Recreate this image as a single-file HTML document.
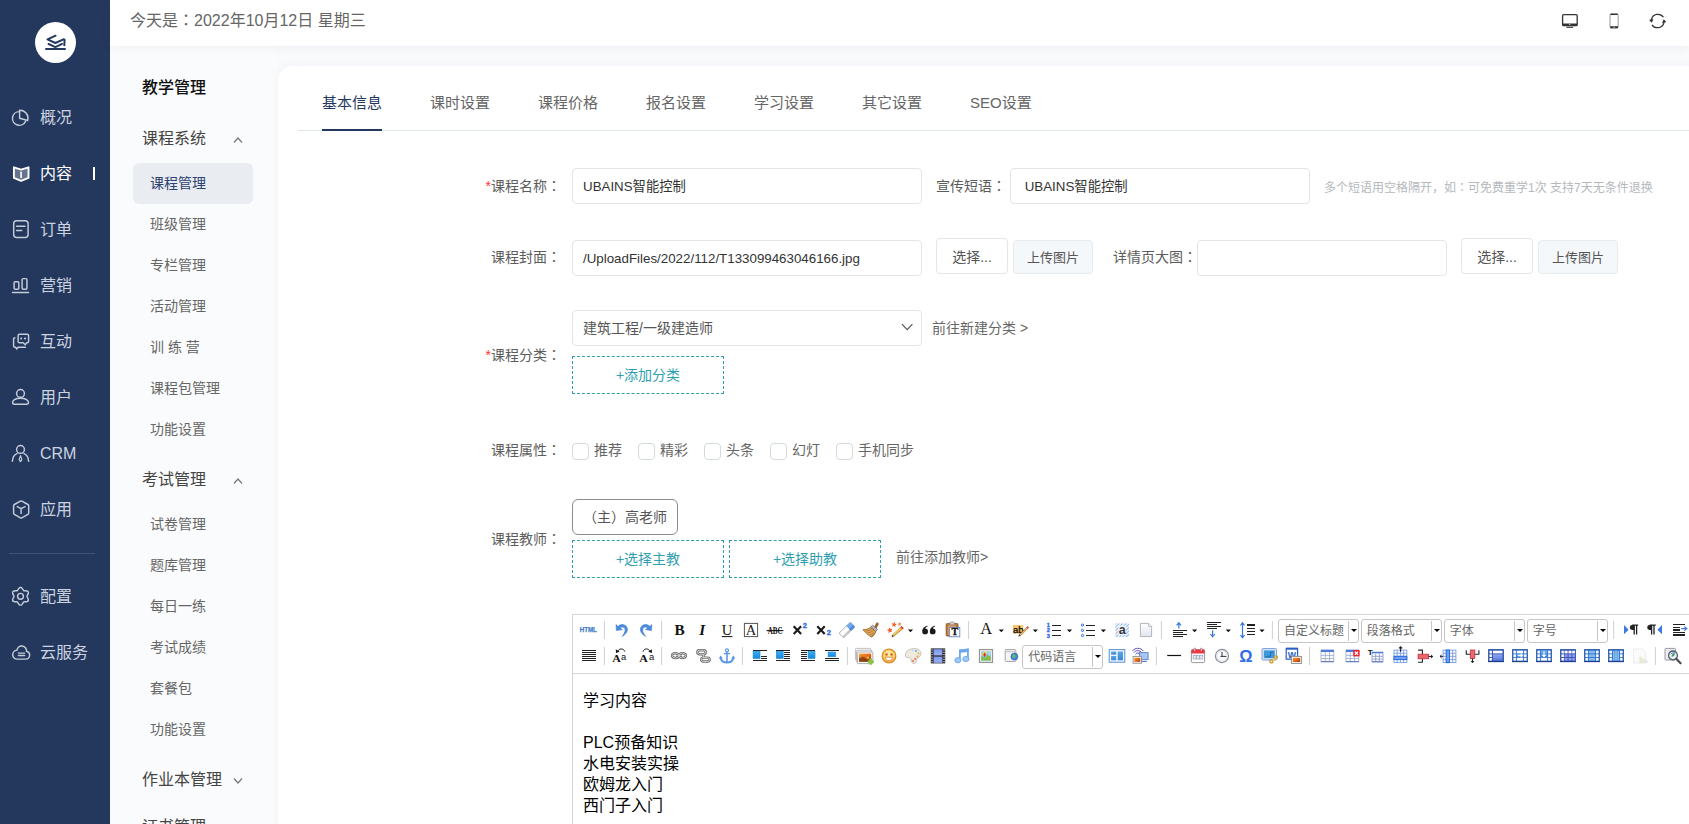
<!DOCTYPE html>
<html lang="zh-CN">
<head>
<meta charset="utf-8">
<title>课程管理</title>
<style>
*{box-sizing:border-box;margin:0;padding:0}
html,body{width:1689px;height:824px;overflow:hidden;background:#f9fafc;font-family:"Liberation Sans","Noto Sans CJK SC",sans-serif;font-size:14px;color:#555}
.abs{position:absolute}
.c{font-family:"Noto Sans CJK TC","Noto Sans CJK SC",sans-serif;line-height:0}
#side{position:absolute;left:0;top:0;width:110px;height:824px;background:#24385d}
#logo{position:absolute;left:35px;top:22px;width:41px;height:41px;border-radius:50%;background:#fff}
#logo svg{position:absolute;left:0;top:0;width:41px;height:41px;fill:none;stroke:#24385d;stroke-width:2;stroke-linecap:round;stroke-linejoin:round}
.nav{position:absolute;left:0;width:110px;height:24px;color:#ccd3e0;font-size:16px;line-height:24px}
.nav span{position:absolute;left:40px;top:1px;white-space:nowrap}
.nav.on{color:#fff}
#navico{position:absolute;left:0;top:0;width:110px;height:824px;fill:none;stroke:#c5ccd9;stroke-width:1.45;stroke-linecap:round;stroke-linejoin:round}
#top{position:absolute;left:110px;top:0;width:1579px;height:46px;background:#fff;box-shadow:0 2px 10px rgba(40,60,100,.06)}
#top .date{position:absolute;left:20px;top:0;line-height:41px;font-size:16px;color:#666;white-space:nowrap}
#top svg{position:absolute;left:0;top:0;width:1579px;height:46px}
#sub{position:absolute;left:110px;top:46px;width:168px;height:778px;background:#fafbfc}
#sub .h1{position:absolute;left:32px;top:30px;font-size:16px;font-weight:500;color:#111;line-height:24px}
#sub .grp{position:absolute;left:32px;font-size:16px;color:#444;line-height:24px;white-space:nowrap}
#sub .it{position:absolute;left:23px;width:120px;height:41px;line-height:41px;padding-left:17px;font-size:14px;color:#666;border-radius:6px;white-space:nowrap}
#sub .it.on{background:#e9ecf1;color:#2c4270}
#sub svg.ar{position:absolute;left:123px;width:10px;height:6px;fill:none;stroke:#777;stroke-width:1.2}
#main{position:absolute;left:278px;top:66px;width:1420px;height:800px;background:#fff;border-radius:14px 0 0 0;box-shadow:0 0 12px rgba(40,60,100,.04)}
#tabs{position:absolute;left:20px;top:0;right:0;height:65px;border-bottom:1px solid #dfe6ea}
.tab{position:absolute;top:25px;font-size:15px;line-height:24px;color:#666;white-space:nowrap}
.tab.on{color:#24385d}
.tab.on:after{content:"";position:absolute;left:0;right:0;top:38px;height:2px;background:#24385d}
#form{position:absolute;left:0;top:0;width:1689px;height:824px}
.lbl{position:absolute;font-size:14px;color:#5c5c5c;line-height:20px;white-space:nowrap;text-align:right;width:100px}
.lbl i{color:#f33;font-style:normal}
.inp{position:absolute;height:36px;border:1px solid #e2e6e6;border-radius:4px;background:#fff;font-size:13.3333px;color:#333;line-height:36px;padding-left:10px;white-space:pre;overflow:hidden}
.btn{position:absolute;height:36px;border:1px solid #e2e6e6;border-radius:4px;background:#fff;font-size:14px;color:#555;line-height:36px;text-align:center;white-space:nowrap}
.btn.g{height:34px;line-height:33px;font-size:13px;background:#f5f8fa;border-color:#e6ebee;color:#555}
.dash{position:absolute;width:152px;height:38px;border:1px dashed #2f9fb0;color:#2f9fb0;font-size:14px;line-height:36px;text-align:center;white-space:nowrap}
.txt{position:absolute;font-size:14px;color:#666;line-height:20px;white-space:nowrap}
.cb{position:absolute;top:443px;width:17px;height:17px;border:1px solid #d3dada;border-radius:4px;background:#fff}
#ed{position:absolute;left:572px;top:614px;width:1200px;height:300px;border:1px solid #d4d4d4;background:#fff}
#edbar{position:absolute;left:0;top:0;width:1200px;height:59px;border-bottom:1px solid #d4d4d4;background:#fff}
#edtxt{position:absolute;left:10px;top:75px;font-size:16px;line-height:21px;color:#000;white-space:nowrap}
#tb{position:absolute;left:572px;top:614px;width:1117px;height:60px}
.cmb{position:absolute;height:24px;border:1px solid #c6c6c6;border-radius:3px;background:#fff;font-size:12px;line-height:22px;color:#666;padding-left:5px;white-space:nowrap}
.cmb:before{content:"";position:absolute;right:9px;top:1px;bottom:1px;width:1px;background:#c6c6c6}
.cmb:after{content:"";position:absolute;right:1px;top:9px;border:3px solid transparent;border-top:3px solid #000;border-bottom:0}
</style>
</head>
<body>
<div id="side">
  <div id="logo"><svg viewBox="0 0 41 41"><path d="M20.6 13.7 12.5 17.4 20.4 21 28.5 17.3 29.6 17.7 29.3 23.3"/><path d="M13.6 22 20.4 25.1 27 21.9"/><path d="M11 27H30"/></svg></div>
  <div class="nav" style="top:105px"><span>概况</span></div>
  <div class="nav on" style="top:161px"><span>内容</span></div>
  <div class="nav" style="top:217px"><span>订单</span></div>
  <div class="nav" style="top:273px"><span>营销</span></div>
  <div class="nav" style="top:329px"><span>互动</span></div>
  <div class="nav" style="top:385px"><span>用户</span></div>
  <div class="nav" style="top:441px"><span>CRM</span></div>
  <div class="nav" style="top:497px"><span>应用</span></div>
  <div class="abs" style="left:9px;top:553px;width:86px;height:1px;background:#3f5278"></div>
  <div class="nav" style="top:584px"><span>配置</span></div>
  <div class="nav" style="top:640px"><span>云服务</span></div>
  <div class="abs" style="left:93px;top:167px;width:2px;height:13px;background:#fff"></div>
  <svg id="navico" viewBox="0 0 110 824">
    <!-- overview pie -->
    <path d="M19.35 111.6A6.85 6.85 0 1 0 25.56 121.34"/><path d="M19.6 110.2A8.1 8.1 0 0 1 27.7 120.5L19.6 118.2Z"/>
    <!-- content book (active) -->
    <path d="M13.9 167.3 21.1 169.6 28.5 167.3V177.9L21.1 180.9 13.9 177.9Z" stroke="#fff" stroke-width="1.9" fill="rgba(255,255,255,.3)"/><path d="M21.1 172.2V177.4" stroke="#fff" stroke-width="1.6"/>
    <!-- order -->
    <rect x="13.7" y="220.8" width="14.4" height="16.6" rx="3"/><path d="M16.6 226.2H25M16.6 230.4H21.8"/>
    <!-- marketing -->
    <rect x="14.1" y="281.8" width="4.7" height="7.4" rx="1"/><rect x="22.1" y="278.6" width="4.8" height="10.6" rx="1"/><path d="M12.5 292.5H28.6"/>
    <!-- interact -->
    <path d="M19.5 334.2H27.2A1.4 1.4 0 0 1 28.6 335.6V341.4A1.4 1.4 0 0 1 27.2 342.8H26.6L25.2 344.8 23.2 342.8H19.5A1.4 1.4 0 0 1 18.1 341.4V335.6A1.4 1.4 0 0 1 19.5 334.2Z"/><path d="M14.8 337.8A1 1 0 0 0 13.6 338.8V346A1.2 1.2 0 0 0 14.8 347.2H15.6L16.7 349 18.2 347.2H25.4"/><path d="M21.1 338.4H21.2M25 338.4H25.1" stroke-width="2"/>
    <!-- user -->
    <circle cx="20.5" cy="393.4" r="3.9"/><path d="M14.2 404.3H26.8A2 2 0 0 0 28.6 402.4C28 399.8 24.6 398.2 20.5 398.2S13 399.8 12.5 402.4A2 2 0 0 0 14.2 404.3Z"/>
    <!-- crm -->
    <circle cx="20.5" cy="449.4" r="3.9"/><path d="M12.4 461.2C12.6 457.6 14.4 454.7 17 453.6M24 453.6C26.6 454.7 28.4 457.6 28.6 461.2"/><path d="M20.5 455.6 21.9 459.6 20.5 461.6 19.1 459.6Z" stroke-width="1.2"/>
    <!-- app -->
    <path d="M20.4 501.1A1.6 1.6 0 0 1 21.9 501.1L27.9 504.5A1.6 1.6 0 0 1 28.7 505.9V512.9A1.6 1.6 0 0 1 27.9 514.3L21.9 517.8A1.6 1.6 0 0 1 20.4 517.8L14.4 514.3A1.6 1.6 0 0 1 13.6 512.9V505.9A1.6 1.6 0 0 1 14.4 504.5Z"/><path d="M17.3 506.6 21.1 508.6 25 506.6M21.1 508.6V513.4"/>
    <!-- settings -->
    <path d="M27.1 596.3 27.1 596.6 27.2 597.0 27.4 597.4 27.7 597.8 27.9 598.3 28.2 598.8 28.3 599.3 28.4 599.8 28.3 600.3 28.2 600.7 27.9 601.1 27.5 601.4 27.0 601.6 26.5 601.7 25.9 601.7 25.4 601.8 24.9 601.8 24.5 601.8 24.1 601.8 23.8 602.0 23.5 602.2 23.3 602.5 23.0 602.9 22.8 603.3 22.5 603.7 22.2 604.2 21.8 604.6 21.4 604.9 21.0 605.1 20.5 605.1 20.0 605.1 19.6 604.9 19.2 604.6 18.8 604.2 18.5 603.7 18.2 603.3 18.0 602.9 17.7 602.5 17.5 602.2 17.2 602.0 16.9 601.8 16.5 601.8 16.1 601.8 15.6 601.8 15.1 601.7 14.5 601.7 14.0 601.6 13.5 601.4 13.1 601.1 12.8 600.7 12.7 600.3 12.6 599.8 12.7 599.3 12.8 598.8 13.1 598.3 13.3 597.8 13.6 597.4 13.8 597.0 13.9 596.6 13.9 596.3 13.9 596.0 13.8 595.6 13.6 595.2 13.3 594.8 13.1 594.3 12.8 593.8 12.7 593.3 12.6 592.8 12.7 592.3 12.8 591.9 13.1 591.5 13.5 591.2 14.0 591.0 14.5 590.9 15.1 590.9 15.6 590.8 16.1 590.8 16.5 590.8 16.9 590.8 17.2 590.6 17.5 590.4 17.7 590.1 18.0 589.7 18.2 589.3 18.5 588.9 18.8 588.4 19.2 588.0 19.6 587.7 20.0 587.5 20.5 587.4 21.0 587.5 21.4 587.7 21.8 588.0 22.2 588.4 22.5 588.9 22.8 589.3 23.0 589.7 23.3 590.1 23.5 590.4 23.8 590.6 24.1 590.8 24.5 590.8 24.9 590.8 25.4 590.8 25.9 590.9 26.5 590.9 27.0 591.0 27.5 591.2 27.9 591.5 28.2 591.9 28.3 592.3 28.4 592.8 28.3 593.3 28.2 593.8 27.9 594.3 27.7 594.8 27.4 595.2 27.2 595.6 27.1 596.0Z"/><circle cx="20.5" cy="596.3" r="2.9"/>
    <!-- cloud -->
    <path transform="translate(21.2 652.5) scale(.92) translate(-20.83 -652.2)" stroke-width="1.57" d="M16.6 659.4H25.8A4.3 4.3 0 0 0 26.6 650.9 5 5 0 0 0 16.2 649.8 4.6 4.6 0 0 0 16.6 659.4Z"/><path d="M18.4 653.1H24.6M18.4 655.4H24.6"/>
  </svg>
</div>
<div id="sub">
  <div class="h1">教学管理</div>
  <div class="grp" style="top:81px">课程系统</div>
  <svg class="ar" style="top:91px" viewBox="0 0 10 6"><path d="M1 5.5 5 1 9 5.5"/></svg>
  <div class="it on" style="top:117px">课程管理</div>
  <div class="it" style="top:158px">班级管理</div>
  <div class="it" style="top:199px">专栏管理</div>
  <div class="it" style="top:240px">活动管理</div>
  <div class="it" style="top:281px">训 练 营</div>
  <div class="it" style="top:322px">课程包管理</div>
  <div class="it" style="top:363px">功能设置</div>
  <div class="grp" style="top:422px">考试管理</div>
  <svg class="ar" style="top:432px" viewBox="0 0 10 6"><path d="M1 5.5 5 1 9 5.5"/></svg>
  <div class="it" style="top:458px">试卷管理</div>
  <div class="it" style="top:499px">题库管理</div>
  <div class="it" style="top:540px">每日一练</div>
  <div class="it" style="top:581px">考试成绩</div>
  <div class="it" style="top:622px">套餐包</div>
  <div class="it" style="top:663px">功能设置</div>
  <div class="grp" style="top:722px">作业本管理</div>
  <svg class="ar" style="top:732px" viewBox="0 0 10 6"><path d="M1 .5 5 5 9 .5"/></svg>
  <div class="grp" style="top:769px">证书管理</div>
</div>
<div id="main">
  <div id="tabs">
    <div class="tab on" style="left:24px">基本信息</div>
    <div class="tab" style="left:132px">课时设置</div>
    <div class="tab" style="left:240px">课程价格</div>
    <div class="tab" style="left:348px">报名设置</div>
    <div class="tab" style="left:456px">学习设置</div>
    <div class="tab" style="left:564px">其它设置</div>
    <div class="tab" style="left:672px">SEO设置</div>
  </div>
</div>
<div id="form">
  <div class="lbl" style="left:461px;top:176px"><i>*</i>课程名称<span class="c" lang="zh-TW">：</span></div>
  <div class="inp" style="left:572px;top:168px;width:350px">UBAINS智能控制</div>
  <div class="lbl" style="left:906px;top:176px">宣传短语<span class="c" lang="zh-TW">：</span></div>
  <div class="inp" style="left:1010px;top:168px;width:300px"> UBAINS智能控制</div>
  <div class="txt" style="left:1324px;top:178px;font-size:12px;color:#b4b8bc">多个短语用空格隔开，如<span class="c" lang="zh-TW">：</span>可免费重学1次 支持7天无条件退换</div>

  <div class="lbl" style="left:461px;top:247px">课程封面<span class="c" lang="zh-TW">：</span></div>
  <div class="inp" style="left:572px;top:240px;width:350px">/UploadFiles/2022/112/T133099463046166.jpg</div>
  <div class="btn" style="left:936px;top:238px;width:72px">选择...</div>
  <div class="btn g" style="left:1013px;top:240px;width:80px">上传图片</div>
  <div class="lbl" style="left:1097px;top:247px">详情页大图<span class="c" lang="zh-TW">：</span></div>
  <div class="inp" style="left:1197px;top:240px;width:250px"></div>
  <div class="btn" style="left:1461px;top:238px;width:72px">选择...</div>
  <div class="btn g" style="left:1538px;top:240px;width:80px">上传图片</div>

  <div class="lbl" style="left:461px;top:345px"><i>*</i>课程分类<span class="c" lang="zh-TW">：</span></div>
  <div class="inp" style="left:572px;top:310px;width:350px;font-size:14px;line-height:34px;color:#555">建筑工程/一级建造师</div>
  <svg class="abs" style="left:900px;top:322px;width:14px;height:10px" viewBox="0 0 14 10"><path d="M2 2.2 7.2 7.6 12.4 2.2" fill="none" stroke="#555" stroke-width="1.2"/></svg>
  <div class="txt" style="left:932px;top:318px">前往新建分类 &gt;</div>
  <div class="dash" style="left:572px;top:356px">+添加分类</div>

  <div class="lbl" style="left:461px;top:440px">课程属性<span class="c" lang="zh-TW">：</span></div>
  <div class="cb" style="left:572px"></div><div class="txt" style="left:594px;top:440px">推荐</div>
  <div class="cb" style="left:638px"></div><div class="txt" style="left:660px;top:440px">精彩</div>
  <div class="cb" style="left:704px"></div><div class="txt" style="left:726px;top:440px">头条</div>
  <div class="cb" style="left:770px"></div><div class="txt" style="left:792px;top:440px">幻灯</div>
  <div class="cb" style="left:836px"></div><div class="txt" style="left:858px;top:440px">手机同步</div>

  <div class="lbl" style="left:461px;top:529px">课程教师<span class="c" lang="zh-TW">：</span></div>
  <div class="btn" style="left:572px;top:499px;width:106px;border-color:#8c8c8c;border-radius:6px;line-height:34px">（主）高老师</div>
  <div class="dash" style="left:572px;top:540px">+选择主教</div>
  <div class="dash" style="left:729px;top:540px">+选择助教</div>
  <div class="txt" style="left:896px;top:547px">前往添加教师&gt;</div>

  <div id="ed">
    <div id="edbar"></div>
    <div id="edtxt">学习内容<br><br>PLC预备知识<br>水电安装实操<br>欧姆龙入门<br>西门子入门</div>
  </div>
</div>
<div id="top">
  <div class="date">今天是<span class="c" lang="zh-TW">：</span>2022年10月12日 星期三</div>
  <svg viewBox="110 0 1579 46">
    <g fill="none" stroke="#333" stroke-width="1.3">
      <rect x="1562.6" y="14.6" width="14.6" height="11" rx="1.2"/>
      <path d="M1562.6 24.6H1577.2" stroke-width="2.2"/><path d="M1566.4 27.3H1573.2" stroke-width="1.1"/>
      <circle cx="1569.8" cy="24.5" r=".6" fill="#fff" stroke="none"/>
    </g>
    <g fill="none" stroke="#333">
      <rect x="1610" y="14" width="8.2" height="14" rx="1.3" stroke="#999" stroke-width="1"/>
      <path d="M1610.4 14.3H1617.8" stroke-width="1.4"/><path d="M1610.2 27.2H1618" stroke-width="2"/>
      <circle cx="1614.1" cy="27.2" r=".6" fill="#fff" stroke="none"/>
    </g>
    <g fill="none" stroke="#333" stroke-width="1.3">
      <path d="M1651.4 19.4A6.7 6.7 0 0 1 1663.4 17.2"/><path d="M1664 22.6A6.7 6.7 0 0 1 1652 24.8"/>
      <path d="M1649.6 20.2 1652.8 19.2 1651.8 22.2Z" fill="#333" stroke-width=".8"/><path d="M1665.8 21.8 1662.6 22.8 1663.8 19.8Z" fill="#333" stroke-width=".8"/>
    </g>
  </svg>
</div>
<svg id="tb" viewBox="572 614 1117 60"><defs>
<linearGradient id="gt" x1="0" y1="0" x2="0" y2="1"><stop offset="0" stop-color="#58a8e8"/><stop offset="1" stop-color="#3a88d4"/></linearGradient>
<pattern id="hatch" width="2.4" height="2.4" patternUnits="userSpaceOnUse" patternTransform="rotate(-45)"><rect width="2.4" height="2.4" fill="#fff"/><rect width="2.4" height="1.1" fill="#8ab4f4"/></pattern>
<linearGradient id="gd" x1="0" y1="0" x2="0" y2="1"><stop offset="0" stop-color="#fff"/><stop offset="1" stop-color="#dfe5f0"/></linearGradient>
<linearGradient id="gb" x1="0" y1="0" x2="0" y2="1"><stop offset="0" stop-color="#39adf4"/><stop offset="1" stop-color="#138ae0"/></linearGradient>
<linearGradient id="gi" x1="0" y1="0" x2="1" y2="1"><stop offset="0" stop-color="#f0a030"/><stop offset=".5" stop-color="#e86818"/><stop offset="1" stop-color="#8a3a10"/></linearGradient>
<radialGradient id="ge" cx=".5" cy=".4" r=".62"><stop offset="0" stop-color="#fff2b8"/><stop offset=".6" stop-color="#fbd878"/><stop offset="1" stop-color="#f0a83c"/></radialGradient>
<linearGradient id="gv" x1="0" y1="0" x2="0" y2="1"><stop offset="0" stop-color="#7a98ec"/><stop offset="1" stop-color="#9ab0f4"/></linearGradient>
<linearGradient id="gm" x1="0" y1="0" x2="0" y2="1"><stop offset="0" stop-color="#90a8f0"/><stop offset="1" stop-color="#5a78dc"/></linearGradient>
<linearGradient id="gm2" x1="0" y1="0" x2="0" y2="1"><stop offset="0" stop-color="#7ab4f0"/><stop offset="1" stop-color="#3c80dc"/></linearGradient>
</defs><g transform="translate(588.3 630)"><text x="-8.6" y="2.4" font-family="Liberation Sans,sans-serif" font-weight="bold" font-size="7.8" fill="#3d7cc4" stroke="#3d7cc4" stroke-width=".25" textLength="17.2" lengthAdjust="spacingAndGlyphs">HTML</text></g><path d="M604.4 621V639" stroke="#cfcfcf" stroke-width="1"/><g transform="translate(621.8 630)"><path d="M-5.8-5.4-5.4.6.6-.4-1.6-2C.4-3.8 3.2-2.8 3.3-.2 3.4 2 2 4.2.4 6.4 4 4.4 6 1.6 5.6-1.2 5-5.2-.4-7.2-3.8-3.6Z" fill="#4a8de0" stroke="#2f6fc4" stroke-width=".5"/></g><g transform="translate(646 630)"><path d="M5.8-5.4 5.4.6-.6-.4 1.6-2C-.4-3.8-3.2-2.8-3.3-.2-3.4 2-2 4.2-.4 6.4-4 4.4-6 1.6-5.6-1.2-5-5.2.4-7.2 3.800-3.600Z" fill="#4a8de0" stroke="#2f6fc4" stroke-width=".5"/></g><path d="M661.6 621V639" stroke="#cfcfcf" stroke-width="1"/><g transform="translate(679.6 630)"><text x="0" y="5" text-anchor="middle" font-family="Liberation Serif,serif" font-weight="bold" font-size="15.2" fill="#111">B</text></g><g transform="translate(702.6 630)"><text x="-.4" y="5" text-anchor="middle" font-family="Liberation Serif,serif" font-weight="bold" font-style="italic" font-size="15.2" fill="#111">I</text></g><g transform="translate(727 630)"><text x="0" y="4.6" text-anchor="middle" font-family="Liberation Serif,serif" font-size="14.6" fill="#111">U</text><path d="M-5.2 6.6H5.4" stroke="#111" stroke-width="1"/></g><g transform="translate(751 630)"><rect x="-6.6" y="-6.6" width="13.2" height="13.2" fill="#fff" stroke="#555" stroke-width="1"/><text x="0" y="5" text-anchor="middle" font-family="Liberation Serif,serif" font-size="14.5" fill="#222">A</text></g><g transform="translate(775 630)"><text x="-7.2" y="4.1" font-family="Liberation Serif,serif" font-weight="bold" font-size="11" fill="#111" textLength="14.8" lengthAdjust="spacingAndGlyphs">ABC</text><path d="M-8.4.6H8.4" stroke="#111" stroke-width="1.1"/></g><g transform="translate(799.5 630)"><path d="M-5.8-3.8 1.6 4M1.6-3.8-5.8 4" stroke="#1a1a1a" stroke-width="2.1"/><text x="3.2" y="-1.9" font-family="Liberation Sans,sans-serif" font-weight="bold" font-size="7.6" fill="#2a62e8" stroke="#2a62e8" stroke-width=".3">2</text></g><g transform="translate(823.5 630)"><path d="M-6.2-3.8 1.2 4M1.200-3.800-6.200 4" stroke="#1a1a1a" stroke-width="2.1"/><text x="3.2" y="5.3" font-family="Liberation Sans,sans-serif" font-weight="bold" font-size="7.6" fill="#2a62e8" stroke="#2a62e8" stroke-width=".3">2</text></g><g transform="translate(847 630)"><g transform="rotate(-44)"><rect x="-8" y="-3.300" width="16" height="6.600" rx="1.300" fill="#fdfdfd" stroke="#a0a4aa" stroke-width=".8"/><path d="M-8 1.400H2.200V3.300H-6.700A1.300 1.300 0 0 1-8 2Z" fill="#c4c6ca"/><path d="M2.200-3.300H6.700A1.300 1.300 0 0 1 8-2V2A1.300 1.300 0 0 1 6.700 3.300H2.200Z" fill="#6ea6f0"/><path d="M2.200 1H8V2A1.300 1.300 0 0 1 6.700 3.300H2.200Z" fill="#4a86e0"/></g></g><g transform="translate(871 630)"><path d="M5.800-7.400 7.600-6.200 5.400-2 3.600-3.200Z" fill="#a8622c" stroke="#7a4418" stroke-width=".5"/><path d="M1.400-4.800 6.400-.8 4.800 1.600-.4-2.600Z" fill="#d4d4d4" stroke="#4a4a4a" stroke-width=".7"/><path d="M1.600-2.600 4.800-.2" stroke="#333" stroke-width=".9" stroke-dasharray=".7 .6"/><path d="M-.4-2.600 4.800 1.600C4.200 3.800 2.400 6 .6 7.200-2.400 5.400-6.200 2.600-8-.4-5-.4-2-1.400-.4-2.600Z" fill="#e4aa5c" stroke="#8a561c" stroke-width=".7"/><path d="M-5.600.8C-3.400 1-1 .4.800-.8M-3.600 2.800C-1.600 2.800.6 2 2.200.6M-1.600 4.800C0 4.600 2 3.600 3.400 2M.2 6.400C1.400 5.800 2.800 4.600 3.800 3.200" fill="none" stroke="#9a6424" stroke-width=".7"/></g><g transform="translate(895 630)"><path d="M6.600-3.600 8.400-1.800-1.200 6.200-3 7-2.600 5Z" fill="#f0bc4c" stroke="#a87424" stroke-width=".7"/><path d="M5.400-2.600 6.600-3.800 8.600-1.800 7.400-.8Z" fill="#e8344c"/><path d="M-3 7-2.600 5-1.200 6.200Z" fill="#333"/><path d="M5-1.400-1.800 4.400" stroke="#fbe08c" stroke-width=".7"/><path d="M-0.40 -8.26 0.04 -6.31 1.97 -5.80 0.25 -4.79 0.37 -2.79 -1.13 -4.11 -2.99 -3.39 -2.19 -5.22 -3.46 -6.76 -1.47 -6.57Z" fill="#f0642c"/><path d="M4.21 -7.88 4.94 -6.63 6.39 -6.72 5.43 -5.64 5.96 -4.29 4.63 -4.86 3.51 -3.95 3.65 -5.39 2.43 -6.16 3.84 -6.48Z" fill="#f2803c"/><path d="M-5.74 -2.73 -4.53 -0.97 -2.42 -1.25 -3.71 0.45 -2.80 2.37 -4.81 1.66 -6.36 3.13 -6.31 1.00 -8.18 -0.02 -6.14 -0.63Z" fill="#f0602c"/></g><path d="M907.9 629.4h5.2l-2.6 2.8z" fill="#111"/><g transform="translate(928.8 630)"><path d="M-1.400-4.200C-4.400-3.600-6.600-1.200-6.600 1.400A2.900 2.900 0 1 0-3.700-1.500C-3.400-2.500-2.500-3.300-1.200-3.600Z" fill="#1a1a1a"/><path d="M6.200-4.200C3.200-3.600 1-1.200 1 1.400A2.900 2.900 0 1 0 3.900-1.500C4.200-2.500 5.100-3.300 6.400-3.600Z" fill="#1a1a1a"/></g><g transform="translate(952.8 630)"><rect x="-6.600" y="-6.400" width="11.800" height="12.400" rx="1" fill="#c07c44" stroke="#8a4e20" stroke-width=".9"/><rect x="-4.600" y="-4.400" width="7.800" height="9" fill="#d8a070"/><rect x="-3" y="-8" width="4.600" height="2.800" rx=".9" fill="#d0d0d0" stroke="#8a8a8a" stroke-width=".6"/><rect x="-3.200" y="-2.600" width="10.200" height="9.400" fill="#fff" stroke="#6a86c0" stroke-width=".9"/><text x="1.900" y="5.200" text-anchor="middle" font-family="Liberation Serif,serif" font-weight="bold" font-size="10" fill="#111" stroke="#111" stroke-width=".3">T</text></g><path d="M968.6 621V639" stroke="#cfcfcf" stroke-width="1"/><g transform="translate(986.2 630)"><text x="0" y="4.400" text-anchor="middle" font-family="Liberation Serif,serif" font-size="16.5" fill="#111">A</text></g><path d="M998.7 629.4h5.2l-2.6 2.8z" fill="#111"/><g transform="translate(1020.3 630)"><rect x="-7.400" y="-5" width="10.200" height="8.600" fill="#f8c870"/><text x="-7.200" y="2.600" font-family="Liberation Sans,sans-serif" font-size="9.400" fill="#000" stroke="#000" stroke-width=".25">ab</text><path d="M7.400-3.600 8.400-2.400.4 5.600-1.600 6.200-.8 4.400Z" fill="#f0c060" stroke="#8a5a2c" stroke-width=".6"/><path d="M6.200-2.400 7.400-3.600 8.400-2.400 7.400-1.300Z" fill="#e83c3c"/><path d="M-1.600 6.200-.8 4.400.3 5.600Z" fill="#222"/></g><path d="M1032.8 629.4h5.2l-2.6 2.8z" fill="#111"/><g transform="translate(1054 630)"><path d="M-2.1 -4.9H7" stroke="#222" stroke-width="1.2" shape-rendering="crispEdges"/><path d="M-2.1 0.4H7" stroke="#222" stroke-width="1.2" shape-rendering="crispEdges"/><path d="M-2.1 5.5H7" stroke="#222" stroke-width="1.2" shape-rendering="crispEdges"/><g font-family="Liberation Sans,sans-serif" font-weight="bold" font-size="5.600" fill="#2a62e8" stroke="#2a62e8" stroke-width=".3"><text x="-7.200" y="-3">1</text><text x="-7.200" y="2.300">2</text><text x="-7.200" y="7.500">3</text></g></g><path d="M1066.9 629.4h5.2l-2.6 2.8z" fill="#111"/><g transform="translate(1088.3 630)"><path d="M-2.3 -4.9H6.8" stroke="#222" stroke-width="1.2" shape-rendering="crispEdges"/><path d="M-2.3 0.4H6.8" stroke="#222" stroke-width="1.2" shape-rendering="crispEdges"/><path d="M-2.3 5.5H6.8" stroke="#222" stroke-width="1.2" shape-rendering="crispEdges"/><g fill="#fff" stroke="#2a62e8" stroke-width="1"><circle cx="-5.800" cy="-4.900" r="1.100"/><circle cx="-5.800" cy=".4" r="1.100"/><circle cx="-5.800" cy="5.500" r="1.100"/></g></g><path d="M1100.8 629.4h5.2l-2.6 2.8z" fill="#111"/><g transform="translate(1122.2 630)"><rect x="-6.800" y="-6.600" width="13.600" height="13.600" fill="url(#hatch)"/><rect x="-3.800" y="-4.400" width="7.600" height="9.600" fill="#fff" opacity=".75"/><text x="0" y="4.400" text-anchor="middle" font-family="Liberation Sans,sans-serif" font-weight="bold" font-size="12.500" fill="#333">a</text></g><g transform="translate(1146 630)"><path d="M-5.600-6.600H2.600L5.600-3.600V6.600H-5.600Z" fill="url(#gd)" stroke="#b4b4b8" stroke-width="1"/><path d="M2.600-6.600V-3.600H5.600" fill="#fff" stroke="#b4b4b8" stroke-width=".9"/></g><path d="M1161.4 621V639" stroke="#cfcfcf" stroke-width="1"/><g transform="translate(1180 630)"><path d="M-7.1 0.3H6.8" stroke="#222" stroke-width="1.1" shape-rendering="crispEdges"/><path d="M-7.1 4.4H6.8" stroke="#222" stroke-width="1.1" shape-rendering="crispEdges"/><path d="M-7.1 2.4H2.8" stroke="#222" stroke-width="1.1" shape-rendering="crispEdges"/><path d="M-7.1 6.5H2.8" stroke="#222" stroke-width="1.1" shape-rendering="crispEdges"/><path d="M-1.200-1.600V-7M-3.400-4.600-1.200-7.400 1-4.600" fill="none" stroke="#3b78d8" stroke-width="1.200"/></g><path d="M1192 629.4h5.2l-2.6 2.8z" fill="#111"/><g transform="translate(1213.8 630)"><path d="M-6.9 -7.5H7" stroke="#222" stroke-width="1.1" shape-rendering="crispEdges"/><path d="M-6.9 -3.7H7" stroke="#222" stroke-width="1.1" shape-rendering="crispEdges"/><path d="M-6.9 -5.6H2.8" stroke="#222" stroke-width="1.1" shape-rendering="crispEdges"/><path d="M-6.9 -1.6H2.8" stroke="#222" stroke-width="1.1" shape-rendering="crispEdges"/><path d="M-1.200.2V6.400M-3.400 4-1.200 6.800 1 4" fill="none" stroke="#3b78d8" stroke-width="1.200"/></g><path d="M1225.7 629.4h5.2l-2.6 2.8z" fill="#111"/><g transform="translate(1247.5 630)"><path d="M-0.6 -4.9H7.5" stroke="#222" stroke-width="1.3" shape-rendering="crispEdges"/><path d="M-0.6 -1.75H7.5" stroke="#222" stroke-width="1.3" shape-rendering="crispEdges"/><path d="M-0.6 1.4H7.5" stroke="#222" stroke-width="1.3" shape-rendering="crispEdges"/><path d="M-0.6 4.5H7.5" stroke="#222" stroke-width="1.3" shape-rendering="crispEdges"/><path d="M-5-6.400V7M-7-4.600-5-7.200-3-4.600M-7 5.200-5 7.800-3 5.200" fill="none" stroke="#3b78d8" stroke-width="1.200"/></g><path d="M1259.4 629.4h5.2l-2.6 2.8z" fill="#111"/><path d="M1272.4 621V639" stroke="#cfcfcf" stroke-width="1"/><path d="M1613.7 621V639" stroke="#cfcfcf" stroke-width="1"/><g transform="translate(1631 630)"><path d="M-7-4.900-2.400-.3-7 4.300Z" fill="#3b78e8"/><path d="M1.2-4.900H7.2M3.2-4.900V4.400M5.6-4.900V4.400" stroke="#222" stroke-width="1.300" fill="none"/><path d="M3.2-4.900H1.2A2.400 2.400 0 0 0 1.2 -.1H3.2Z" fill="#222"/></g><g transform="translate(1655 630)"><path d="M-5.4-4.900H0.8M-3.4-4.900V4.400M-1-4.900V4.400" stroke="#222" stroke-width="1.300" fill="none"/><path d="M-3.4-4.900H-5.4A2.400 2.400 0 0 0 -5.4 -.1H-3.4Z" fill="#222"/><path d="M7-4.900 2.400-.3 7 4.300Z" fill="#3b78e8"/></g><g transform="translate(1679.4 630)"><path d="M-6.4 -5.5H5.4" stroke="#222" stroke-width="1.2" shape-rendering="crispEdges"/><path d="M-6.4 2.4H5.4" stroke="#222" stroke-width="1.2" shape-rendering="crispEdges"/><path d="M-6.4 4.9H5.4" stroke="#222" stroke-width="1.2" shape-rendering="crispEdges"/><path d="M-6.4 -2.75H1" stroke="#222" stroke-width="1.2" shape-rendering="crispEdges"/><path d="M-6.4 -0.1H1" stroke="#222" stroke-width="1.2" shape-rendering="crispEdges"/><path d="M1.800-1.400H7.200M5-3.400 7.400-1.400 5 .6" stroke="#3b78e8" stroke-width="1.200" fill="none"/></g><g transform="translate(589 656)"><path d="M-7 -5.9H7" stroke="#222" stroke-width="1" shape-rendering="crispEdges"/><path d="M-7 -3.75H7" stroke="#222" stroke-width="1" shape-rendering="crispEdges"/><path d="M-7 -1.6H7" stroke="#222" stroke-width="1" shape-rendering="crispEdges"/><path d="M-7 0.5H7" stroke="#222" stroke-width="1" shape-rendering="crispEdges"/><path d="M-7 2.6H7" stroke="#222" stroke-width="1" shape-rendering="crispEdges"/><path d="M-7 4.75H7" stroke="#222" stroke-width="1" shape-rendering="crispEdges"/></g><path d="M604.4 647V665" stroke="#cfcfcf" stroke-width="1"/><g transform="translate(619.4 656)"><text x="-7.25" y="6.100" font-family="Liberation Serif,serif" font-weight="bold" font-size="10.400" fill="#111" textLength="8.600" lengthAdjust="spacingAndGlyphs">A</text><text x="1.6" y="3.800" font-family="Liberation Sans,sans-serif" font-size="9.400" fill="#111">a</text><path d="M-1.600-4.600C-.4-7.800 4.200-8 5.400-4.400" fill="none" stroke="#111" stroke-width="1"/><path d="M-3.600-6.800-3.400-3 .2-4.300Z" fill="#111"/></g><g transform="translate(646.8 656)"><text x="-7.6" y="6.100" font-family="Liberation Serif,serif" font-weight="bold" font-size="10.400" fill="#111" textLength="8.600" lengthAdjust="spacingAndGlyphs">A</text><text x="2.3" y="3.800" font-family="Liberation Sans,sans-serif" font-size="9.400" fill="#111">a</text><path d="M-3.900-4.400C-2.700-8 1.900-7.800 3.100-4.600" fill="none" stroke="#111" stroke-width="1"/><path d="M5.200-6.800 5-3 1.500-4.300Z" fill="#111"/></g><path d="M661.6 647V665" stroke="#cfcfcf" stroke-width="1"/><g transform="translate(679 655.6)"><g fill="none" stroke="#686868" stroke-width="2.400"><ellipse cx="-3.500" cy="0" rx="3.400" ry="2.400"/><ellipse cx="3.500" cy="0" rx="3.400" ry="2.400"/><path d="M-3 0H3"/></g><g fill="none" stroke="#dedede" stroke-width=".8"><ellipse cx="-3.500" cy="0" rx="3.400" ry="2.400"/><ellipse cx="3.500" cy="0" rx="3.400" ry="2.400"/><path d="M-3 0H3"/></g></g><g transform="translate(703.5 656)"><g fill="none" stroke="#686868" stroke-width="2.400"><rect x="-6.100" y="-5.700" width="8.300" height="3.900" rx="1.950"/><rect x="-2.200" y="1.600" width="8.300" height="3.900" rx="1.950"/><path d="M-.4-1.800.4 1.600"/></g><g fill="none" stroke="#dedede" stroke-width=".9"><rect x="-6.100" y="-5.700" width="8.300" height="3.900" rx="1.950"/><rect x="-2.200" y="1.600" width="8.300" height="3.900" rx="1.950"/><path d="M-.4-1.800.4 1.600"/></g></g><g transform="translate(727 656)"><g fill="none" stroke="#5a98e6" stroke-width="1.600"><circle cx="0" cy="-5.600" r="1.500" stroke-width="1.200"/><path d="M0-4V6.400"/><path d="M-3.200-2.400H3.200" stroke-width="1.300"/><path d="M-6.400 1.800C-5.800 5-3 6.600 0 6.600S5.800 5 6.400 1.800" stroke-width="2"/></g><path d="M-8.200 2.600-6.400-.6-4.200 2.600ZM8.200 2.600 6.400-.6 4.200 2.600Z" fill="#5a98e6"/></g><path d="M742.4 647V665" stroke="#cfcfcf" stroke-width="1"/><g transform="translate(760 656)"><path d="M-7 -5.9H7" stroke="#222" stroke-width="1" shape-rendering="crispEdges"/><path d="M-7 4.5H7" stroke="#222" stroke-width="1" shape-rendering="crispEdges"/><path d="M0.6 0.25H7" stroke="#222" stroke-width="1" shape-rendering="crispEdges"/><path d="M0.6 2.4H7" stroke="#222" stroke-width="1" shape-rendering="crispEdges"/><rect x="-6.9" y="-4.6" width="6.9" height="7.1" fill="url(#gb)" stroke="#1f86d8" stroke-width=".6"/></g><g transform="translate(783.4 656)"><path d="M-7 -5.9H7" stroke="#222" stroke-width="1" shape-rendering="crispEdges"/><path d="M-7 4.5H7" stroke="#222" stroke-width="1" shape-rendering="crispEdges"/><path d="M0.4 -3.75H7" stroke="#222" stroke-width="1" shape-rendering="crispEdges"/><path d="M0.4 -1.6H7" stroke="#222" stroke-width="1" shape-rendering="crispEdges"/><path d="M0.4 0.5H7" stroke="#222" stroke-width="1" shape-rendering="crispEdges"/><path d="M0.4 2.6H7" stroke="#222" stroke-width="1" shape-rendering="crispEdges"/><rect x="-7.1" y="-4.6" width="6.9" height="7.1" fill="url(#gb)" stroke="#1f86d8" stroke-width=".6"/></g><g transform="translate(808 656)"><path d="M-7 -5.9H7" stroke="#222" stroke-width="1" shape-rendering="crispEdges"/><path d="M-7 4.5H7" stroke="#222" stroke-width="1" shape-rendering="crispEdges"/><path d="M-7 -3.75H-0.6" stroke="#222" stroke-width="1" shape-rendering="crispEdges"/><path d="M-7 -1.6H-0.6" stroke="#222" stroke-width="1" shape-rendering="crispEdges"/><path d="M-7 0.5H-0.6" stroke="#222" stroke-width="1" shape-rendering="crispEdges"/><path d="M-7 2.6H-0.6" stroke="#222" stroke-width="1" shape-rendering="crispEdges"/><rect x="0.1" y="-4.6" width="6.9" height="7.1" fill="url(#gb)" stroke="#1f86d8" stroke-width=".6"/></g><g transform="translate(832 656)"><path d="M-7 -5.9H7" stroke="#222" stroke-width="1" shape-rendering="crispEdges"/><path d="M-7 2.5H7" stroke="#222" stroke-width="1" shape-rendering="crispEdges"/><path d="M-7 4.5H7" stroke="#222" stroke-width="1" shape-rendering="crispEdges"/><rect x="-3.9" y="-4" width="7.5" height="4.75" fill="url(#gb)" stroke="#1f86d8" stroke-width=".6"/></g><path d="M847.4 647V665" stroke="#cfcfcf" stroke-width="1"/><g transform="translate(864.4 656)"><rect x="-9" y="-7.600" width="15.400" height="11.800" rx=".8" fill="#fff" stroke="#b4b4b4" stroke-width=".8"/><rect x="-8" y="-5.800" width="15.400" height="11.800" rx=".8" fill="#fff" stroke="#aaa" stroke-width=".8"/><rect x="-7" y="-4" width="15.400" height="11.600" rx=".8" fill="#fff" stroke="#9a9a9a" stroke-width=".8"/><rect x="-5.400" y="-2.400" width="12.200" height="8.200" fill="url(#gi)"/><path d="M-5.400 5.800V2.400L-1.600.4 2.600 3.200 5 5.800Z" fill="#5a2a10" opacity=".6"/><circle cx="3.400" cy="1.600" r="1.200" fill="#f8d070" opacity=".8"/><path d="M6.400 2.600V8.800M3.300 5.700H9.500" stroke="#8cc63f" stroke-width="2.500"/></g><g transform="translate(889 656)"><circle cx="0" cy="0" r="6.800" fill="url(#ge)" stroke="#e08a24" stroke-width="1.300"/><circle cx="-2.500" cy="-1.600" r="1.250" fill="#c8641c"/><circle cx="2.500" cy="-1.600" r="1.250" fill="#c8641c"/><path d="M-3.800 1.200H3.800C3.400 3.600 1.900 4.700 0 4.700S-3.400 3.600-3.800 1.200Z" fill="#fff" stroke="#d8782c" stroke-width=".8"/></g><g transform="translate(913 656)"><path d="M-7.600-1.200C-7.400-5.400-2.600-7.800 2.400-7.400 6.600-7 8.600-4.400 7.800-1.400 7 1.800 4.400 1.400 3.600 3.600 3 5.400 3.600 7.400 1 7.400-1.400 7.400-2.200 5.400-2 3.800-1.800 2-3.200 1.600-4.800 1.600-6.600 1.600-7.700.6-7.600-1.200Z" fill="#eeeae0" stroke="#bdb8ac" stroke-width=".8"/><circle cx="3" cy="-5" r="1.100" fill="#6ab0e8"/><circle cx="5.400" cy="-2.600" r="1.100" fill="#e8c04c"/><circle cx="4.400" cy=".6" r="1" fill="#e89a3c"/><circle cx="0" cy="5" r="1" fill="#e8703c"/><circle cx="2.200" cy="2.800" r=".9" fill="#d84c3c"/><circle cx="-.4" cy="-5.600" r=".9" fill="#b8d8f0"/></g><g transform="translate(938 656)"><rect x="-7.200" y="-7.600" width="14.400" height="15" fill="#26262c"/><rect x="-4.400" y="-6.800" width="8.800" height="6.200" fill="url(#gv)"/><rect x="-4.400" y=".6" width="8.800" height="6.200" fill="url(#gv)"/><rect x="-6.55" y="-6.60" width="1.100" height="1.100" fill="#fff"/><rect x="-6.55" y="-4.25" width="1.100" height="1.100" fill="#fff"/><rect x="-6.55" y="-1.90" width="1.100" height="1.100" fill="#fff"/><rect x="-6.55" y="0.45" width="1.100" height="1.100" fill="#fff"/><rect x="-6.55" y="2.80" width="1.100" height="1.100" fill="#fff"/><rect x="-6.55" y="5.15" width="1.100" height="1.100" fill="#fff"/><rect x="5.45" y="-6.60" width="1.100" height="1.100" fill="#fff"/><rect x="5.45" y="-4.25" width="1.100" height="1.100" fill="#fff"/><rect x="5.45" y="-1.90" width="1.100" height="1.100" fill="#fff"/><rect x="5.45" y="0.45" width="1.100" height="1.100" fill="#fff"/><rect x="5.45" y="2.80" width="1.100" height="1.100" fill="#fff"/><rect x="5.45" y="5.15" width="1.100" height="1.100" fill="#fff"/></g><g transform="translate(961.7 656)"><path d="M-1.800-5.400 6.200-6.400V2.800M-1.800-5.400V4" fill="none" stroke="#6ea8ea" stroke-width="1.800"/><path d="M-2.700-6.400 7.100-7.600V-4.200L-2.700-3Z" fill="#6ea8ea"/><ellipse cx="-3.800" cy="4.200" rx="3.100" ry="2.600" fill="#9cc8f4" stroke="#6ea8ea" stroke-width=".9"/><ellipse cx="4.200" cy="3" rx="3.100" ry="2.600" fill="#9cc8f4" stroke="#6ea8ea" stroke-width=".9"/></g><g transform="translate(986 656)"><rect x="-6.600" y="-6.400" width="13.200" height="12.800" fill="#ececec" stroke="#8a8a8a" stroke-width="1"/><rect x="-4.800" y="-4.600" width="9.600" height="9.200" fill="#8cc8e8"/><path d="M-4.800 4.600V0L-1 2 1.600-1.400 4.800 1V4.600Z" fill="#78c050"/><path d="M-4.800-1.600-1.600-4.600H1.600L-1 .6Z" fill="#f0d860"/><path d="M1.600-4.600H4.800V-1L2.400-.4Z" fill="#a0d8f0"/><path d="M-1.400-3.600 0-1.400-1.400 1.200-2.800-1.400Z" fill="#e8242c"/><circle cx="2.800" cy="2.400" r="1" fill="#f09030"/></g><g transform="translate(1011 656)"><rect x="-5.800" y="-6.400" width="10.600" height="11.800" rx=".8" fill="#f6f6f8" stroke="#a4a4ac" stroke-width="1"/><path d="M-5.800-4.400H4.800" stroke="#c8c8d0" stroke-width="1.400"/><circle cx="3.400" cy=".6" r="3.500" fill="#3c84d8" stroke="#2a5ea8" stroke-width=".6"/><path d="M1.400-.8C2.400-2.200 3.800-1.800 4.400-.6 5 .6 3.800 1.400 3 2.600 2 2.200 1.200.6 1.400-.8Z" fill="#6ac060"/></g><g transform="translate(1117 656)"><rect x="-7.800" y="-6.400" width="15.600" height="12.600" fill="#f2f7fd" stroke="#5a8ed4" stroke-width="1"/><rect x="-5.900" y="-4.500" width="5.100" height="3.200" fill="url(#gt)"/><rect x="-5.900" y="0" width="5.100" height="4.300" fill="url(#gt)"/><rect x=".7" y="-4.500" width="5.300" height="8.800" fill="url(#gt)"/></g><g transform="translate(1140.5 656)"><g fill="none" stroke="#5a4ab8" stroke-width="1"><path d="M-6.600-3.400C-4.600-6-.8-6 1.200-3.400"/><path d="M-5-1.600C-3.800-3.400-1.600-3.400-.4-1.600"/><path d="M-8-5C-5.400-8.600.2-8.600 2.800-5"/></g><rect x="-1" y="-3.400" width="8.600" height="7" fill="#a8c4f0" stroke="#5a84c8" stroke-width=".9"/><path d="M1.400 5.400H6.400" stroke="#5a84c8" stroke-width="1.200"/><rect x="-7.400" y=".4" width="8.400" height="6.800" fill="#fafafa" stroke="#8a8a8a" stroke-width=".9"/><rect x="-6.200" y="1.800" width="6" height="4" fill="url(#gi)"/></g><path d="M1156.4 647V665" stroke="#cfcfcf" stroke-width="1"/><g transform="translate(1174 656)"><path d="M-6.800-.5H7" stroke="#111" stroke-width="1.200"/></g><g transform="translate(1198 656)"><rect x="-6.600" y="-6.400" width="13.200" height="13" rx="1" fill="#fdfdfd" stroke="#8c8c8c" stroke-width=".9"/><path d="M-6.600-2.600V-5.400A1 1 0 0 1-5.600-6.400H5.600A1 1 0 0 1 6.600-5.400V-2.600Z" fill="#ec3844"/><g fill="#fff" stroke="#b02030" stroke-width=".6"><rect x="-4.200" y="-7.800" width="1.800" height="3" rx=".8"/><rect x="2.400" y="-7.800" width="1.800" height="3" rx=".8"/></g><g fill="#e6eaf2" stroke="#9aa2b4" stroke-width=".7"><rect x="-4.800" y="-.4" width="3" height="3.400"/><rect x="-1.500" y="-.4" width="3" height="3.400"/><rect x="1.800" y="-.4" width="3" height="3.400"/></g></g><g transform="translate(1222 656)"><circle cx="0" cy="0" r="6.600" fill="#f0f2f8" stroke="#8a8e98" stroke-width="1.100"/><circle cx="0" cy="0" r="5.200" fill="#fafbfe" stroke="#d0d4e0" stroke-width=".6"/><path d="M0-4V.4H4.400" fill="none" stroke="#333" stroke-width="1"/><path d="M-1.600.4H0" stroke="#333" stroke-width="1"/></g><g transform="translate(1245.9 656)"><text x="0" y="6" text-anchor="middle" font-family="Liberation Sans,sans-serif" font-weight="bold" font-size="16.500" fill="#2f6cf0">Ω</text></g><g transform="translate(1269.8 656)"><rect x="-7.800" y="-7.400" width="14.600" height="11.400" rx="1" fill="#dce8f8" stroke="#7a9ed8" stroke-width="1"/><rect x="-6" y="-5.600" width="11" height="7.800" fill="#3c98d8"/><path d="M-4.400.8H.6V-3.600H3" fill="none" stroke="#2a6ab0" stroke-width="1"/><g fill="none" stroke="#c89a30" stroke-width="1.400"><circle cx="1.600" cy="5.400" r="1.500"/><circle cx="6" cy="1.400" r="1.500"/></g><path d="M2.600 4.400 6.800 2.600M3.400 6 5.400 2.600" stroke="#e8c870" stroke-width="1"/></g><g transform="translate(1294 656)"><path d="M-7.800-7.400H3.600V3.200H-7.800Z" fill="#fff" stroke="#2a5ec8" stroke-width="1.200"/><path d="M-7.800-7.400H3.600" stroke="#2a5ec8" stroke-width="2"/><text x="-2" y="1.800" text-anchor="middle" font-family="Liberation Sans,sans-serif" font-weight="bold" font-size="8.800" fill="#2a5ec8">W</text><rect x="-2.600" y=".4" width="10.200" height="7" fill="#f8f8f8" stroke="#8a8a8a" stroke-width=".9"/><rect x="-1.200" y="1.800" width="7.400" height="4.200" fill="url(#gi)"/></g><path d="M1309.5 647V665" stroke="#cfcfcf" stroke-width="1"/><g transform="translate(1327.4 656)"><rect x="-6.4" y="-5.9" width="12.8" height="11.6" fill="#fbfcfe" stroke="#9aa8c8" stroke-width=".8"/><rect x="-6.4" y="-6.2" width="12.8" height="2.2" fill="#4a7ae0"/><path d="M-2.13 -3.7V5.699999999999999" stroke="#9aa8c8" stroke-width=".8"/><path d="M2.13 -3.7V5.699999999999999" stroke="#9aa8c8" stroke-width=".8"/><path d="M-6.4 -0.57H6.4" stroke="#9aa8c8" stroke-width=".8"/><path d="M-6.4 2.57H6.4" stroke="#9aa8c8" stroke-width=".8"/><path d="M-6.4 5.699999999999999H6.4" stroke="#5a70b8" stroke-width="1"/></g><g transform="translate(1352.4 656)"><rect x="-6.4" y="-5.9" width="12.8" height="11.6" fill="#fbfcfe" stroke="#9aa8c8" stroke-width=".8"/><rect x="-6.4" y="-6.2" width="12.8" height="2.2" fill="#4a7ae0"/><path d="M-2.13 -3.7V5.699999999999999" stroke="#9aa8c8" stroke-width=".8"/><path d="M2.13 -3.7V5.699999999999999" stroke="#9aa8c8" stroke-width=".8"/><path d="M-6.4 -0.57H6.4" stroke="#9aa8c8" stroke-width=".8"/><path d="M-6.4 2.57H6.4" stroke="#9aa8c8" stroke-width=".8"/><path d="M-6.4 5.699999999999999H6.4" stroke="#5a70b8" stroke-width="1"/><rect x=".8" y="-6" width="6.400" height="6.400" fill="#e8202c"/><path d="M2.400-4.400 5.600-1.200M5.600-4.400 2.400-1.200" stroke="#fff" stroke-width="1.300"/></g><g transform="translate(1375.8 656)"><text x="-8" y="-.6" font-family="Liberation Sans,sans-serif" font-weight="bold" font-size="8" fill="#111">T</text><rect x="-3.8" y="-3.8" width="11" height="9.6" fill="#fbfcfe" stroke="#8096c8" stroke-width=".8"/><rect x="-3.8" y="-4.1" width="11" height="1.4" fill="#4a7ae0"/><path d="M-0.13 -2.4V5.8" stroke="#8096c8" stroke-width=".8"/><path d="M3.53 -2.4V5.8" stroke="#8096c8" stroke-width=".8"/><path d="M-3.8 0.33H7.2" stroke="#8096c8" stroke-width=".8"/><path d="M-3.8 3.07H7.2" stroke="#8096c8" stroke-width=".8"/><path d="M-3.8 5.8H7.2" stroke="#5a70b8" stroke-width="1"/></g><g transform="translate(1400.4 656)"><rect x="-6.4" y="-5.9" width="12.8" height="12.5" fill="#fff" stroke="#7a9ce0" stroke-width=".9"/><path d="M-3.20 -5.9V6.6" stroke="#7a9ce0" stroke-width=".9"/><path d="M0.00 -5.9V6.6" stroke="#7a9ce0" stroke-width=".9"/><path d="M3.20 -5.9V6.6" stroke="#7a9ce0" stroke-width=".9"/><path d="M-6.4 -2.78H6.4" stroke="#7a9ce0" stroke-width=".9"/><path d="M-6.4 0.35H6.4" stroke="#7a9ce0" stroke-width=".9"/><path d="M-6.4 3.47H6.4" stroke="#7a9ce0" stroke-width=".9"/><rect x="-6.400" y=".35" width="12.800" height="3.300" fill="#7a9cf0" stroke="#1f70e0" stroke-width="1"/><path d="M.2-4.200V-9M-1.400-7.600.2-9.200 1.800-7.600" fill="none" stroke="#222" stroke-width="1.100"/></g><g transform="translate(1425 656)"><path d="M-6.900-5.900H-2.600V6.200H-6.900" fill="none" stroke="#222" stroke-width="1.100"/><rect x="-6.900" y="-1.800" width="10.600" height="4.600" fill="#ec6870" stroke="#c0303c" stroke-width=".8"/><path d="M3.700.5H7.600M6-1 7.800.5 6 2" fill="none" stroke="#222" stroke-width="1"/></g><g transform="translate(1448.6 656)"><rect x="-5.5" y="-5.9" width="12.8" height="12.5" fill="#fff" stroke="#7a9ce0" stroke-width=".9"/><path d="M-2.30 -5.9V6.6" stroke="#7a9ce0" stroke-width=".9"/><path d="M0.90 -5.9V6.6" stroke="#7a9ce0" stroke-width=".9"/><path d="M4.10 -5.9V6.6" stroke="#7a9ce0" stroke-width=".9"/><path d="M-5.5 -2.78H7.300000000000001" stroke="#7a9ce0" stroke-width=".9"/><path d="M-5.5 0.35H7.300000000000001" stroke="#7a9ce0" stroke-width=".9"/><path d="M-5.5 3.47H7.300000000000001" stroke="#7a9ce0" stroke-width=".9"/><rect x="-2.400" y="-5.900" width="3.300" height="12.500" fill="#7a9cf0" stroke="#1f70e0" stroke-width="1"/><path d="M-5.500.4H-8.400M-7 -1.100-8.600.4-7 1.900" fill="none" stroke="#222" stroke-width="1"/></g><g transform="translate(1472.5 656)"><path d="M-6.200-5.700V-1.800H6.400V-5.700" fill="none" stroke="#222" stroke-width="1.100"/><rect x="-2.200" y="-6" width="4.500" height="8.500" fill="#ec6870" stroke="#c0303c" stroke-width=".8"/><path d="M0 2.500V6.400M-1.500 5 0 6.800 1.500 5" fill="none" stroke="#222" stroke-width="1"/></g><g transform="translate(1496 656)"><rect x="-7.400" y="-6.400" width="14.800" height="11.900" fill="#3450b0" stroke="#2c5cac" stroke-width="1"/><rect x="-6.5" y="-5.3" width="2.4" height="2.7" fill="#fff"/><rect x="-6.5" y="-1.7" width="2.4" height="2.7" fill="#fff"/><rect x="-6.5" y="1.9" width="2.4" height="2.7" fill="#fff"/><rect x="-3.1" y="-5.3" width="9.6" height="2.7" fill="#fff"/><rect x="-3.1" y="-1.7" width="9.6" height="6.3" fill="url(#gm)"/><path d="M-7.900 5.600H7.900" stroke="#1c3c8c" stroke-width="1.100"/></g><g transform="translate(1520 656)"><rect x="-7.400" y="-6.400" width="14.800" height="11.900" fill="#3f78cc" stroke="#2c5cac" stroke-width="1"/><rect x="-6.5" y="-5.3" width="2.4" height="2.7" fill="#fff"/><rect x="4.1" y="-5.3" width="2.4" height="2.7" fill="#fff"/><rect x="-6.5" y="-1.7" width="2.4" height="2.7" fill="#fff"/><rect x="4.1" y="-1.7" width="2.4" height="2.7" fill="#fff"/><rect x="-6.5" y="1.9" width="2.4" height="2.7" fill="#fff"/><rect x="4.1" y="1.9" width="2.4" height="2.7" fill="#fff"/><rect x="-3.1" y="-5.3" width="6.2" height="2.7" fill="#fff"/><rect x="-3.1" y="1.9" width="6.2" height="2.7" fill="#fff"/><rect x="-3.1" y="-2" width="6.2" height="3.3" fill="url(#gm2)"/><path d="M-2.200-.35H2.400M.6-2 2.600-.35.6 1.300" fill="none" stroke="#fff" stroke-width="1.100"/><path d="M-7.900 5.600H7.900" stroke="#1c3c8c" stroke-width="1.100"/></g><g transform="translate(1544 656)"><rect x="-7.400" y="-6.400" width="14.800" height="11.900" fill="#3f78cc" stroke="#2c5cac" stroke-width="1"/><rect x="-6.5" y="-5.3" width="2.4" height="2.7" fill="#fff"/><rect x="4.1" y="-5.3" width="2.4" height="2.7" fill="#fff"/><rect x="-6.5" y="-1.7" width="2.4" height="2.7" fill="#fff"/><rect x="4.1" y="-1.7" width="2.4" height="2.7" fill="#fff"/><rect x="-6.5" y="1.9" width="2.4" height="2.7" fill="#fff"/><rect x="4.1" y="1.9" width="2.4" height="2.7" fill="#fff"/><rect x="-3.1" y="1.9" width="6.2" height="2.7" fill="#fff"/><rect x="-3.1" y="-5.6" width="6.2" height="6.6" fill="url(#gm2)"/><path d="M0-4.600V.4M-1.700-1.200 0 .7 1.700-1.200" fill="none" stroke="#fff" stroke-width="1.100"/><path d="M-7.900 5.600H7.900" stroke="#1c3c8c" stroke-width="1.100"/></g><g transform="translate(1568 656)"><rect x="-7.400" y="-6.400" width="14.800" height="11.900" fill="#3a50b4" stroke="#2c5cac" stroke-width="1"/><rect x="-6.5" y="-5.3" width="2.4" height="2.7" fill="#fff"/><rect x="-6.5" y="-1.7" width="2.4" height="2.7" fill="#fff"/><rect x="-6.5" y="1.9" width="2.4" height="2.7" fill="#fff"/><rect x="-3.4" y="-5.3" width="3" height="2.7" fill="#fff"/><rect x="0.5" y="-5.3" width="3" height="2.7" fill="#fff"/><rect x="4.2" y="-5.3" width="2.7" height="2.7" fill="#fff"/><rect x="-3.4" y="-1.7" width="3" height="2.7" fill="#8c9cf0"/><rect x="0.5" y="-1.7" width="3" height="2.7" fill="#8c9cf0"/><rect x="4.2" y="-1.7" width="2.7" height="2.7" fill="#8c9cf0"/><rect x="-3.4" y="1.9" width="3" height="2.7" fill="#8c9cf0"/><rect x="0.5" y="1.9" width="3" height="2.7" fill="#8c9cf0"/><rect x="4.2" y="1.9" width="2.7" height="2.7" fill="#8c9cf0"/><path d="M-7.900 5.600H7.900" stroke="#1c3c8c" stroke-width="1.100"/></g><g transform="translate(1592 656)"><rect x="-7.400" y="-6.400" width="14.800" height="11.900" fill="#3474c8" stroke="#2c5cac" stroke-width="1"/><rect x="-6.5" y="-5.3" width="2.4" height="2.7" fill="#fff"/><rect x="4.1" y="-5.3" width="2.4" height="2.7" fill="#fff"/><rect x="-6.5" y="-1.7" width="2.4" height="2.7" fill="#fff"/><rect x="4.1" y="-1.7" width="2.4" height="2.7" fill="#fff"/><rect x="-6.5" y="1.9" width="2.4" height="2.7" fill="#fff"/><rect x="4.1" y="1.9" width="2.4" height="2.7" fill="#fff"/><rect x="-3.1" y="-5.3" width="6.2" height="2.7" fill="#84bcf2"/><rect x="-3.1" y="-1.7" width="6.2" height="2.7" fill="#84bcf2"/><rect x="-3.1" y="1.9" width="6.2" height="2.7" fill="#84bcf2"/><path d="M-7.900 5.600H7.900" stroke="#1c3c8c" stroke-width="1.100"/></g><g transform="translate(1616 656)"><rect x="-7.400" y="-6.400" width="14.800" height="11.900" fill="#3474c8" stroke="#2c5cac" stroke-width="1"/><rect x="-6.5" y="-5.3" width="2.4" height="2.7" fill="#fff"/><rect x="4.1" y="-5.3" width="2.4" height="2.7" fill="#fff"/><rect x="-6.5" y="-1.7" width="2.4" height="2.7" fill="#fff"/><rect x="4.1" y="-1.7" width="2.4" height="2.7" fill="#fff"/><rect x="-6.5" y="1.9" width="2.4" height="2.7" fill="#fff"/><rect x="4.1" y="1.9" width="2.4" height="2.7" fill="#fff"/><rect x="-3.1" y="-5.3" width="1.8" height="9.9" fill="#84bcf2"/><rect x="-0.9" y="-5.3" width="1.8" height="9.9" fill="#84bcf2"/><rect x="1.3" y="-5.3" width="1.8" height="9.9" fill="#84bcf2"/><path d="M-7.900 5.600H7.900" stroke="#1c3c8c" stroke-width="1.100"/></g><g transform="translate(1640 656)"><g opacity=".28"><path d="M-6.400-7H2.200L5.400-3.800V7H-6.400Z" fill="#f4f4f4" stroke="#b0b0b0" stroke-width=".9"/><rect x="-.6" y="1" width="2.400" height="6" fill="#7ac060"/><rect x="2.200" y="2.600" width="2.400" height="4.400" fill="#e8a040"/><rect x="5" y="4" width="2.200" height="3" fill="#6aa8e8"/></g></g><path d="M1655.4 647V665" stroke="#cfcfcf" stroke-width="1"/><g transform="translate(1673 656)"><rect x="-8" y="-7.600" width="10.600" height="11.600" rx=".8" fill="#ececf0" stroke="#9a9aa4" stroke-width="1"/><circle cx="0" cy="-.6" r="4.400" fill="#e8f0f8" stroke="#555a64" stroke-width="1.300"/><path d="M-1.600.8C-1.200-1.600.2-3 1.800-3 2 -1 .8.800-1.600.8Z" fill="#3c9a5c"/><path d="M-2.200-2C-1-3.200.6-3.400 1.800-3" fill="none" stroke="#3c78d8" stroke-width="1"/><path d="M3.200 2.800 7.600 7.200" stroke="#4a4a50" stroke-width="2.200" stroke-linecap="round"/></g></svg>
<div class="cmb" style="left:1278px;top:619px;width:81px">自定义标题</div>
<div class="cmb" style="left:1360.7px;top:619px;width:81.3px">段落格式</div>
<div class="cmb" style="left:1443.7px;top:619px;width:81.3px">字体</div>
<div class="cmb" style="left:1526.7px;top:619px;width:81.3px">字号</div>
<div class="cmb" style="left:1022.3px;top:645px;width:81px">代码语言</div>
</body>
</html>
